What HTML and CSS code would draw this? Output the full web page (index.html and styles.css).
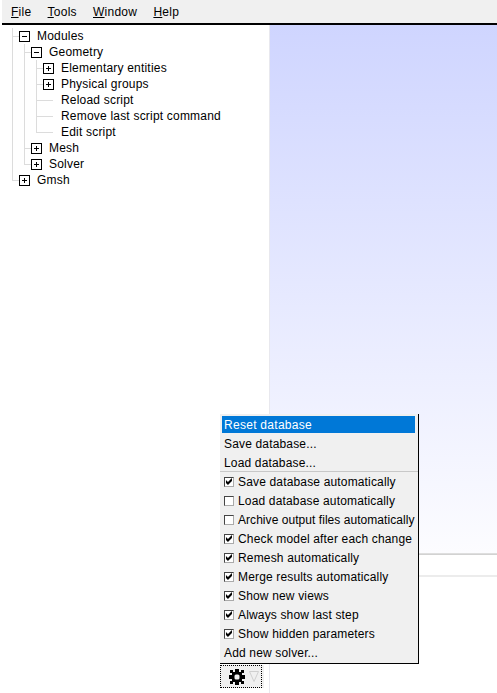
FILE: index.html
```html
<!DOCTYPE html>
<html lang="en">

<head>
    <meta charset="UTF-8">
    <meta name="viewport" content="width=device-width, initial-scale=1.0">
    <title>Gmsh</title>
    <link rel="stylesheet" href="styles.css">
</head>

<body>
    <div class="menubar">
        <span class="menubar-item"><u>F</u>ile</span>
        <span class="menubar-item"><u>T</u>ools</span>
        <span class="menubar-item"><u>W</u>indow</span>
        <span class="menubar-item"><u>H</u>elp</span>
    </div>

    <div class="main">
        <div class="side">
            <ul class="tree root">
                <li>
                    <div class="row"><span class="box minus"></span>Modules</div>
                    <ul class="tree">
                        <li>
                            <div class="row"><span class="box minus"></span>Geometry</div>
                            <ul class="tree">
                                <li>
                                    <div class="row"><span class="box plus"></span>Elementary entities</div>
                                </li>
                                <li>
                                    <div class="row"><span class="box plus"></span>Physical groups</div>
                                </li>
                                <li class="leaf">
                                    <div class="row"><span class="box-empty"></span>Reload script</div>
                                </li>
                                <li class="leaf">
                                    <div class="row"><span class="box-empty"></span>Remove last script command</div>
                                </li>
                                <li class="leaf">
                                    <div class="row"><span class="box-empty"></span>Edit script</div>
                                </li>
                            </ul>
                        </li>
                        <li>
                            <div class="row"><span class="box plus"></span>Mesh</div>
                        </li>
                        <li>
                            <div class="row"><span class="box plus"></span>Solver</div>
                        </li>
                    </ul>
                </li>
                <li>
                    <div class="row"><span class="box plus"></span>Gmsh</div>
                </li>
            </ul>

            <div class="gear-button">
                <svg class="gear" width="16" height="16" viewBox="0 0 16 16">
                    <path fill="#000" d="M6 0h4v16H6zM0 6h16v4H0zM3 3h10v10H3zM1 1h3v3H1zM12 1h3v3h-3zM1 12h3v3H1zM12 12h3v3h-3z" />
                    <rect x="5.500" y="5.500" width="5" height="5" rx="1.500" fill="#f0f0f0" />
                </svg>
                <svg class="arrow" width="10" height="11" viewBox="0 0 10 11">
                    <path fill="none" stroke="#cfcfcf" d="M.5 .5h9L5 10.500z" />
                </svg>
            </div>
        </div>

        <div class="content">
            <div class="graphic"></div>
            <div class="message-rule"></div>
            <div class="message-gap"></div>
            <div class="message-rule light"></div>
        </div>
    </div>

    <div class="popup">
        <div class="popup-item active">Reset database</div>
        <div class="popup-item">Save database...</div>
        <div class="popup-item divider">Load database...</div>
        <label class="popup-item check on">Save database automatically</label>
        <label class="popup-item check">Load database automatically</label>
        <label class="popup-item check tight">Archive output files automatically</label>
        <label class="popup-item check on">Check model after each change</label>
        <label class="popup-item check on">Remesh automatically</label>
        <label class="popup-item check on">Merge results automatically</label>
        <label class="popup-item check on">Show new views</label>
        <label class="popup-item check on">Always show last step</label>
        <label class="popup-item check on divider">Show hidden parameters</label>
        <div class="popup-item">Add new solver...</div>
    </div>
</body>

</html>
```

FILE: styles.css
```css
html,
body {
    height: 100%;
}

body {
    font-family: "Liberation Sans", Arial, sans-serif;
    font-size: 12px;
    color: #000;
    background: #fff;
    margin: 0;
    overflow: hidden;
    position: relative;
}

.menubar {
    height: 22px;
    margin-left: 2px;
    padding: 1px 0 0 9px;
    display: flex;
    align-items: center;
    background: #f0f0f0;
    border-bottom: 2px solid #000;
    letter-spacing: .25px;
}

.menubar-item {
    margin-right: 16.200px;
}

.main {
    display: flex;
    height: 668px;
}

.side {
    width: 269px;
    flex: none;
    border-right: 1px solid #e8e8ee;
    display: flex;
    flex-direction: column;
    justify-content: space-between;
    align-items: flex-end;
}

.tree {
    list-style: none;
    margin: 0 0 0 5px;
    padding: 0;
    letter-spacing: .2px;
}

.tree.root {
    align-self: flex-start;
    margin: 3px 0 0 12px;
}

.tree li {
    position: relative;
    padding-left: 7px;
}

/* vertical connector */
.tree li::before {
    content: '';
    position: absolute;
    left: 0;
    top: 0;
    bottom: 0;
    width: 1px;
    background: #dcdcdc;
}

.tree li:last-child::before {
    bottom: auto;
    height: 8px;
}

/* horizontal connector */
.tree li::after {
    content: '';
    position: absolute;
    left: 0;
    top: 8px;
    width: 7px;
    height: 1px;
    background: #dcdcdc;
}

.tree li.leaf::after {
    width: 17px;
}

.row {
    height: 16px;
    display: flex;
    align-items: center;
    white-space: nowrap;
}

.box,
.box-empty {
    width: 11px;
    height: 11px;
    flex: none;
    margin-right: 7px;
}

.box {
    border: 1px solid #000;
    background: #fff;
    box-sizing: content-box;
    width: 9px;
    height: 9px;
    position: relative;
}

.box::before {
    content: '';
    position: absolute;
    left: 2px;
    top: 4px;
    width: 5px;
    height: 1px;
    background: #000;
}

.box.plus::after {
    content: '';
    position: absolute;
    left: 4px;
    top: 2px;
    width: 1px;
    height: 5px;
    background: #000;
}

.gear-button {
    width: 42px;
    height: 23px;
    margin: 0 7px 5px 0;
    box-sizing: border-box;
    border: 1px dotted #000;
    background: #f0f0f0;
    box-shadow: 2px 0 0 #f0f0f0;
    display: flex;
    align-items: center;
    padding-left: 8px;
    gap: 4px;
}

.content {
    flex: 1;
    min-width: 0;
    display: flex;
    flex-direction: column;
}

.graphic {
    height: 528px;
    background: linear-gradient(#cfd5ff, #fcfcff);
}

.message-rule {
    height: 2px;
    background: linear-gradient(#e4e4e4, #cccccc);
}

.message-rule.light {
    background: #ececec;
}

.message-gap {
    height: 20px;
}

.popup {
    position: absolute;
    left: 220px;
    top: 414px;
    width: 199px;
    box-sizing: border-box;
    padding: 2px 2px 1px;
    background: #f0f0f0;
    border-right: 1px solid #000;
    border-bottom: 1px solid #000;
}

.popup-item {
    display: flex;
    align-items: center;
    height: 19px;
    padding-left: 2px;
    white-space: nowrap;
    margin-right: 1px;
    letter-spacing: .16px;
}

.popup-item.active {
    height: 17px;
    margin-bottom: 1px;
    background: #0078d7;
    color: #fff;
    letter-spacing: .28px;
}

.popup-item.tight {
    letter-spacing: .05px;
}

.popup-item.divider {
    position: relative;
}

.popup-item.divider::after {
    content: '';
    position: absolute;
    left: -2px;
    right: -3px;
    bottom: 0;
    height: 1px;
    background: #c8c8c8;
}

.check {
    position: relative;
}

.check::before {
    content: '';
    box-sizing: border-box;
    width: 10px;
    height: 10px;
    flex: none;
    margin-right: 4px;
    border: 1px solid;
    border-color: #444 #aaa #aaa #444;
    background: #fff;
}

/* tick */
.check.on::after {
    content: '';
    position: absolute;
    left: 3px;
    top: 5px;
    width: 8px;
    height: 8px;
    background: #000;
    clip-path: polygon(12% 37%, 37% 62%, 87% 12%, 87% 50%, 37% 100%, 12% 75%);
}
```
